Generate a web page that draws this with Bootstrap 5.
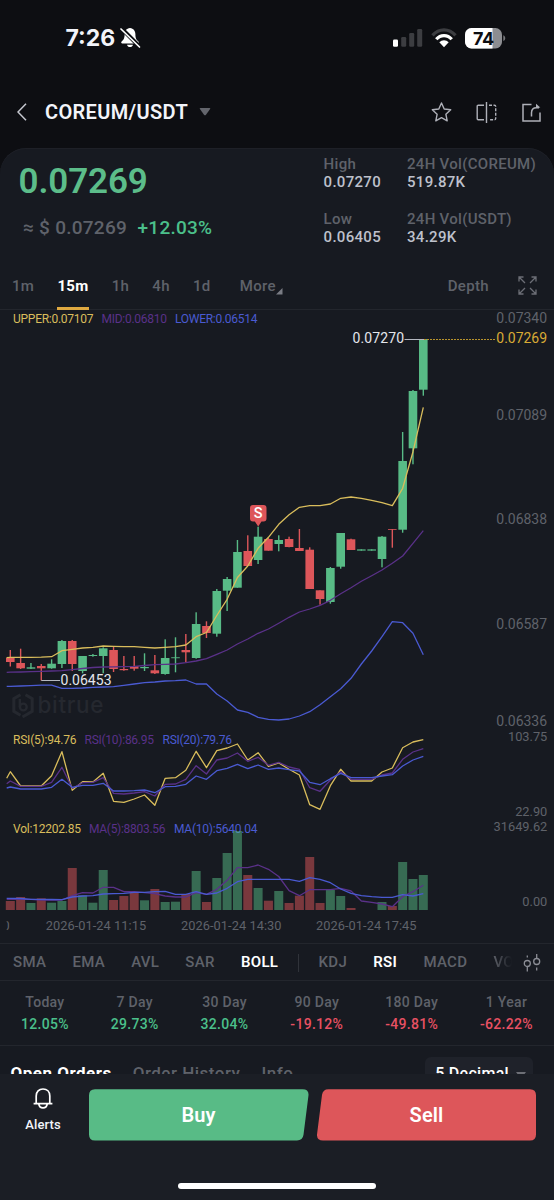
<!DOCTYPE html>
<html lang="en" data-bs-theme="dark">
<head>
<meta charset="utf-8">
<meta name="viewport" content="width=device-width, initial-scale=1">
<title>COREUM/USDT</title>
<link href="https://cdn.jsdelivr.net/npm/bootstrap@5.3.0/dist/css/bootstrap.min.css" rel="stylesheet">
<style>
:root{--up:#58bb86;--down:#dd565a;--dim:#5f626a;--panel:#171a21;--hair:#23262d}
body{background:#0d0e12;font-family:Roboto,"Liberation Sans",sans-serif;font-weight:500;color:#f2f4fa;line-height:1;letter-spacing:.3px}
.app-screen{width:554px;height:1200px;overflow:hidden}
svg{display:block;flex:none}
.status-bar{height:76px;padding:0 48px 0 65.5px}
.clock{font:700 23px Inter,sans-serif;letter-spacing:0}
.title-bar{height:72px;padding:0 13px 0 17px}
.pair{font-size:20px;font-weight:600;letter-spacing:.35px}
.market{background:var(--panel);border-radius:26px 26px 0 0;box-shadow:inset 0 1px #1e2027;height:1052px}
.quote{height:114px;padding:0 18px 0 18.5px}
.last{font-size:35px;line-height:40px;font-weight:600;color:#5cbd8a;letter-spacing:-.1px;margin-top:14px}
.approx{font-size:19px;line-height:24px;color:var(--dim);margin-top:14px;padding-left:4.5px;letter-spacing:.26px}
.dim{color:var(--dim)}
.upc{color:#4bc08b}
.downc{color:#e85163}
.stats{font-size:15px;line-height:18px;color:#bec1cc}
.stats>div{height:55.5px}
.stats .k{color:var(--dim)}
.ranges{height:48px;font-size:15px;padding:0 17.5px 0 12px;color:var(--dim)}
.ranges>span{line-height:48px}
.ranges .on{color:#fff;font-weight:700;height:48px;box-shadow:inset 0 -3px #dfa941}
.hair-b{border-bottom:1px solid var(--hair)}
.hair-t{border-top:1px solid var(--hair)}
.indicators{height:38px;font-size:15px;padding:1px 13px 0;color:var(--dim);gap:26.2px}
.indicators>span{flex:none}
.on{color:#fff}
.indicators .on{font-weight:600}
.divider{width:1px;height:18px;background:#30333a;margin:0 -6.500px}
.fade-out{-webkit-mask-image:linear-gradient(90deg,#000,transparent 19px);margin-right:-28px}
.perf{height:65px;padding:10px 21px 0;font-size:14px;line-height:22px;letter-spacing:.3px}
.orders{height:60px;padding:11px 21px 0 10.5px;font-size:17px;line-height:32px;color:var(--dim);letter-spacing:.5px}
.decimals{background:#1f222a;border-radius:6px;height:50px;padding:1px 7px 0 10px;color:#fff;font-size:16px;letter-spacing:.3px}
.trade-bar{background:#1b1e25;width:554px;height:126px;left:0;top:1074px;padding:15px 18px 0 0}
.alerts{width:86px;font-size:13px;letter-spacing:.1px}
.trade{width:219px;height:52px;font-size:20px;font-weight:600;letter-spacing:.1px;color:#fff;background:none;border:0}
.trade svg{left:0;top:0}
.trade span{position:relative}
.home-pill{width:198px;height:6px;border-radius:3px;background:#fff;left:178px;top:109px}
.chart text{font-weight:400;letter-spacing:0}
</style>
</head>
<body>
<div class="app-screen position-relative">
  <div class="status-bar d-flex align-items-center justify-content-between">
    <div class="d-flex align-items-center gap-1">
      <span class="clock">7:26</span>
      <svg width="22" height="22" viewBox="0 0 22 22"><path fill="#fff" d="M11 1C7.500 1.400 5.600 4 5.600 7.200c0 4-.9 5.400-3 7.300-.8.8-.4 1.900.7 1.900h15.400c1.100 0 1.500-1.100.7-1.900-2.100-1.900-3-3.300-3-7.300C16.400 4 14.500 1.400 11 1zM8 17.700c.4 1.500 1.500 2.300 3 2.300s2.600-.8 3-2.300z"/><path d="M2.500 1.500 20.500 19.500" stroke="#0d0e12" stroke-width="4"/><path d="M2 2 20.500 20" stroke="#fff" stroke-width="1.700" stroke-linecap="round"/></svg>
    </div>
    <div class="d-flex align-items-center" style="gap:8px">
      <svg width="30" height="18" viewBox="0 0 30 18"><g fill="#3c3d41"><rect x="8.200" y="8" width="5" height="9.800" rx="1.300"/><rect x="16.200" y="4" width="5" height="13.800" rx="1.300"/><rect x="24.200" y="0" width="5" height="17.800" rx="1.300"/></g><rect x="0" y="10.500" width="5" height="7.300" rx="1.300" fill="#fff"/></svg>
      <svg width="26" height="20" viewBox="0 0 26 20"><g fill="none" stroke-width="3.200"><path stroke="#3c3d41" d="M1.500 7.400C8-.1 18-.1 24.500 7.400"/><path stroke="#fff" d="M5.300 11.300c4.200-5 11.200-5 15.400 0"/></g><path fill="#fff" d="M8.300 14.300c2.700-2.700 6.700-2.700 9.400 0L13 19.200z"/></svg>
      <svg width="41" height="21" viewBox="0 0 41 21"><defs><clipPath id="bat"><rect width="37" height="20.500" rx="6.500"/></clipPath></defs><g clip-path="url(#bat)"><rect width="37" height="21" fill="#8c8d91"/><rect width="27.500" height="21" fill="#fff"/></g><path d="M38.300 7.300c2.600.8 2.600 5 0 5.800z" fill="#77787c"/><text x="18.500" y="16.600" text-anchor="middle" font-family="Inter" font-weight="700" font-size="18" letter-spacing="-.3" fill="#0d0e12">74</text></svg>
    </div>
  </div>
  <div class="title-bar d-flex align-items-center">
    <svg width="10" height="18" viewBox="0 0 10 18"><path d="M9 .8 1 9l8 8.200" fill="none" stroke="#c6c8d0" stroke-width="1.500"/></svg>
    <span class="pair" style="margin-left:18px">COREUM/USDT</span>
    <svg width="12" height="8" viewBox="0 0 12 8" style="margin-left:10.500px"><path d="M1.500 0h9q1.300 0 .6 1L7 6.800q-1 1.100-2 0L.9 1Q.2 0 1.500 0z" fill="#63656c"/></svg>
    <div class="ms-auto d-flex align-items-center">
      <svg width="21" height="20" viewBox="0 0 21 20" fill="none" stroke="#aeb0b8" stroke-width="1.400" stroke-linejoin="round"><path d="m10.500 1 2.700 6 6.500.8-4.800 4.500 1.300 6.500-5.700-3.200-5.700 3.200 1.300-6.500L1.300 7.800l6.500-.8z"/></svg>
      <svg width="21" height="21" viewBox="0 0 21 21" fill="none" stroke="#aeb0b8" stroke-width="1.400" style="margin-left:24.500px"><path d="M8 3.200H2.200q-1 0-1 1v12.600q0 1 1 1H8M10.500 0v21"/><path stroke-dasharray="3 1.500" d="M13 3.200h5.500q1.200 0 1.200 1.200v12.200q0 1.200-1.200 1.200H13"/></svg>
      <svg width="19" height="19" viewBox="0 0 19 19" fill="none" stroke="#aeb0b8" stroke-width="1.500" style="margin-left:25px"><path d="M9.500 1.500H1v16.400h17V9.500M9.500 13.500V9.800q0-5 5-5H17"/><path d="M14 .7 18.300 4.500 14 5z" fill="#aeb0b8" stroke="none"/></svg>
    </div>
  </div>

  <main class="market">
    <section class="quote d-flex">
      <div>
        <div class="last">0.07269</div>
        <div class="approx">≈ $ 0.07269 <span class="upc" style="margin-left:5.500px">+12.03%</span></div>
      </div>
      <div class="stats ms-auto d-flex pt-2" style="margin-top:-1.500px;gap:26px">
        <div><div><div class="k">High</div>0.07270</div><div style="margin-top:19.500px"><div class="k">Low</div>0.06405</div></div>
        <div><div><div class="k">24H Vol(COREUM)</div>519.87K</div><div style="margin-top:19.500px"><div class="k">24H Vol(USDT)</div>34.29K</div></div>
      </div>
    </section>
    <nav class="ranges d-flex hair-b align-items-center" style="gap:23.200px">
      <span>1m</span><span class="on">15m</span><span>1h</span><span>4h</span><span>1d</span>
      <span class="d-flex" style="margin-left:6px">More<svg width="7" height="7" viewBox="0 0 7 7" style="margin:26px 0 0 0"><path d="M6.500 0v6.500H0z" fill="#7a7c84"/></svg></span>
      <span class="ms-auto">Depth</span>
      <svg width="19" height="19" viewBox="0 0 19 19" fill="none" stroke="#6c6e76" stroke-width="1.300" style="margin-left:5.500px"><path d="M1 5.500V1h4.500M1 1l6 6M13.500 1H18v4.500M18 1l-6 6M1 13.500V18h4.500M1 18l6-6M18 13.500V18h-4.500M18 18l-6-6"/></svg>
    </nav>
    <svg class="chart" id="chart" width="554" height="633" viewBox="0 310 554 633" font-family="Roboto, sans-serif"></svg>
    <nav class="indicators d-flex align-items-center hair-t hair-b">
      <span>SMA</span><span>EMA</span><span>AVL</span><span>SAR</span><span class="on">BOLL</span><span class="divider"></span><span>KDJ</span><span class="on">RSI</span><span>MACD</span><span class="fade-out">VOL</span>
      <svg width="18" height="18" viewBox="0 0 18 18" fill="none" stroke="#8b8d95" stroke-width="1.300" class="ms-auto"><circle cx="4.300" cy="9.500" r="3"/><circle cx="13.700" cy="7.500" r="3"/><path d="M4.300 1.500v2M4.300 12.500v5M13.700 0v4.500M13.700 13.500v3"/></svg>
    </nav>
    <section class="perf d-flex justify-content-between text-center hair-b">
      <div><div class="dim">Today</div><div class="upc">12.05%</div></div>
      <div><div class="dim">7 Day</div><div class="upc">29.73%</div></div>
      <div><div class="dim">30 Day</div><div class="upc">32.04%</div></div>
      <div><div class="dim">90 Day</div><div class="downc">-19.12%</div></div>
      <div><div class="dim">180 Day</div><div class="downc">-49.81%</div></div>
      <div><div class="dim">1 Year</div><div class="downc">-62.22%</div></div>
    </section>
    <section class="orders d-flex" style="gap:21px">
      <span class="on fw-bold">Open Orders</span><span>Order History</span><span>Info</span>
      <div class="decimals ms-auto d-flex">5 Decimal<svg width="10" height="6" viewBox="0 0 10 6" style="margin:14px 0 0 7px"><path d="M0 0h10L6 5.500H4z" fill="#6d6f76"/></svg></div>
    </section>
  </main>

  <footer class="trade-bar position-absolute d-flex align-items-start">
    <div class="alerts d-flex flex-column align-items-center">
      <svg width="20" height="21" viewBox="0 0 20 21" fill="none" stroke="#fff" stroke-width="1.700" stroke-linejoin="round" style="margin-top:-1px"><path d="M3.200 15.500V8c0-4.300 2.800-7 6.800-7s6.800 2.700 6.800 7v7.500M.6 15.700h18.800M5.800 16c.4 2.500 2 3.900 4.200 3.900s3.800-1.400 4.200-3.900"/></svg>
      <span style="margin-top:9px">Alerts</span>
    </div>
    <button class="trade p-0 position-relative" style="margin-left:3px"><svg class="position-absolute" width="220" height="52" viewBox="0 0 220 52"><path d="M6 .3h207.500q6.500 0 6 6l-5 39.500q-.8 5.700-6.500 5.700H6q-6 0-6-6v-39.200q0-6 6-6z" fill="#58bb86"/></svg><span>Buy</span></button>
    <button class="trade p-0 position-relative" style="margin-left:9px"><svg class="position-absolute" width="220" height="52" viewBox="0 0 220 52"><path d="M11.500 .3H213q6 0 6 6v39.200q0 6-6 6H6q-6.300 0-6-6l5-39.500q.8-5.700 6.500-5.700z" fill="#dd565a"/></svg><span>Sell</span></button>
    <div class="home-pill position-absolute"></div>
  </footer>
</div>

<script src="https://cdn.jsdelivr.net/npm/bootstrap@5.3.0/dist/js/bootstrap.bundle.min.js"></script>
<script>
const UP='#58bb86', DOWN='#dd565a', GOLD='#d9bd5c', VIOLET='#5a3189', BLUE='#4a5ad2', DIM='#5f626a';
const X0=10.3, STEP=10.325, W=8.600;
const cx=i=>+(X0+i*STEP).toFixed(2);
// direction, body top, body bottom, wick top, wick bottom
const candles=[
['d',657.7,662,650,666.500],['d',663,668.300,648.700,669],['u',667.300,668.700,663,669],['d',666,668.300,664,680.500],['u',663.700,668.300,659.300,668.700],
['u',641,664,640,668],['d',641,664,640,671],['u',656,671,656,673.300],['u',655,656,654,656.700],['u',648.300,656,647.300,673.300],
['d',650,669,647,672],['d',669,670.200,656,670.700],['d',666,668.700,656,670.700],['u',667,668.200,653.300,671],['d',670.300,673.300,655,674],
['u',658,674,639.300,674.700],['u',657.300,658.200,637.300,672.300],['d',650,652.300,634,662.300],['u',624,658,612.300,658.700],['d',626,633,621.300,638],
['u',591,633.700,589,636.700],['u',579,590.700,577,611],['u',552,587.700,540,587.700],['d',551,566,535.300,566],['u',536.700,560,526.700,564],
['d',539,550.700,538,550.700],['u',540,544,535.300,551.300],['d',539,547,536.700,547.300],['d',548,551,529,551],['d',549.700,589,547.300,589],
['d',590.300,599,590.300,604.700],['u',568,602,567,603.700],['u',533,566.700,533,568.700],['d',539.300,550,538.700,550],['u',549.400,550.600,549.400,550.600],
['u',549.400,550.600,549.400,550.600],['u',536.700,559,536,567.300],['d',529.200,530,529.200,547.700],['u',461,529.700,432,532.700],['u',391,448.300,390,464.300],['u',339,389.700,339,395.700]];
const volTop=[901,897,903,898.300,902.700,901,868,895.300,902.700,870,900,896,892.300,900.300,889,902,901.700,894,871,902,878,853,831,875,888,900.700,891,903,895.700,857,903,890,896,908,910,910,902,906,862,879,875];
// each series starts at the left edge of the plot, then one value per candle
const lines=[
[GOLD,[657.7,657.3,657.3,657.3,657.2,656.7,650.7,649.3,648,647.3,646,646.3,646.7,646.7,647.3,648,647.3,646.7,645,636.7,632.5,615.5,599.3,577.5,566,548.3,537.3,524.3,514.7,507.3,505.7,505.7,504,498.3,497,498.3,500.3,502.7,505.7,488.3,451.7,407.3]],
[VIOLET,[672.3,672.2,672,671.7,671.3,671,670.7,669.7,668.5,667.5,667,666.8,666.6,666.3,665.5,664.7,664.3,664,662.7,661,658.7,654.3,650,644,639,633.3,629,623.3,617.3,612,609,605.3,600.3,593.7,587.7,581.3,575.7,570,563.3,556,543.3,530.7]],
[BLUE,[686.3,686.3,686,685.7,685.2,685.2,688.3,688.3,688,687.3,687,686.7,685.3,684,682.7,682,681,680.7,680,684,684,694,701,710,712.3,717.3,719.3,720,719,716,711.7,704.7,696.7,688.7,678.3,664,651,636.7,621.7,622.7,633.3,654.7]],
[GOLD,[778.3,771.7,786,786,786,775.7,751.7,790.3,781.7,782,773.3,801.3,802.3,799,795,805.3,778.3,777.7,770.3,751.3,767.7,750.7,748,744,760,752.7,766.3,763,769.3,775,804.7,809.3,785.7,769.3,781,781,781,772,768,747.7,742,739.7]],
[VIOLET,[783.7,781,786.3,786.3,786.3,782.3,767.3,788.3,782.7,782.3,777.7,793.3,794,793,791.7,796,784.3,784,779.3,765.7,774,760,758,753,761.3,757.3,765.3,762.3,767,769.3,787.7,791.3,780,771.7,779.3,779.3,779.3,775,773,759.3,752,748.7]],
[BLUE,[788,787,789,789,789,787.3,779.3,787.3,785.3,785.3,783.3,791,791,790.7,790,792.7,786.7,786.3,784.3,776,779.3,770.7,768.3,764.3,768.7,765,769.3,768,769.7,771,782.3,784.7,778.7,773.3,777.7,777.7,777.7,776,774.7,766,760,756.3]],
[VIOLET,[899.3,899.3,899.3,899.3,900,900,900,895.7,892.7,893,887.3,887.3,891.7,891.7,892.7,893.7,896,897,897,892.7,894.3,889.3,880.3,867.7,867.7,865,869.3,876.5,890.7,895.7,889.7,889.7,889.7,888.3,891,901,902.3,904,906.7,896.7,891.7,885.3]],
[BLUE,[898.3,898.3,898.5,899.3,899.3,899.5,899.7,897,896,895.7,894,893.7,893.3,892.3,892.3,891.7,891.3,894.3,894.3,891.7,894.3,893,888.3,881.7,879.3,879.3,879.3,879.3,879.3,881.3,877.7,879.3,882.7,889,893.3,895.7,896.7,897.3,897.3,894.7,896,893.7]]];
let s='';
const txt=(t,x,y,size,fill,w,extra='')=>`<text x="${x}" y="${y}" font-size="${size}" fill="${fill}" ${w?`textLength="${w}"`:''} ${extra}>${t}</text>`;
// watermark
s+=`<g fill="none" stroke="#25282f" stroke-width="3"><path d="M20.500 694.700 13.800 698.700v12.600l6.700 4M25.500 694.700l6.700 4v12.600L22.500 717"/><circle cx="23.300" cy="707" r="3.400" stroke-width="2.400"/><path d="M19.800 699v8" stroke-width="2.400"/></g>`;
s+=txt('bitrue',37.500,713,22.500,'#25282f',66,'style="font-weight:500;font-family:Inter,sans-serif"');
candles.forEach((c,i)=>{const f=c[0]==='u'?UP:DOWN,x=cx(i);
 s+=`<rect x="${x-W/2}" y="${c[1]}" width="${W}" height="${(c[2]-c[1]).toFixed(1)}" fill="${f}"/><rect x="${x-.7}" y="${c[3]}" width="1.400" height="${(c[4]-c[3]).toFixed(1)}" fill="${f}"/>`;
});
// legends
s+=txt('UPPER:0.07107',13,323.300,12,GOLD,80.500)+txt('MID:0.06810',101.500,323.300,12,VIOLET,65.500)+txt('LOWER:0.06514',175,323.300,12,BLUE,82.500);
s+=txt('RSI(5):94.76',13,743.500,12,GOLD,63.500)+txt('RSI(10):86.95',84.500,743.500,12,VIOLET,69.500)+txt('RSI(20):79.76',162.500,743.500,12,BLUE,69.500);
s+=txt('Vol:12202.85',13,833.400,12,GOLD,68)+txt('MA(5):8803.56',89,833.400,12,VIOLET,76.500)+txt('MA(10):5640.04',174,833.400,12,BLUE,83.500);
volTop.forEach((y,i)=>{ if(y<910) s+=`<rect x="${cx(i)-4.500}" y="${y}" width="9" height="${(910-y).toFixed(1)}" fill="${candles[i][0]==='u'?UP:DOWN}" opacity=".5"/>`;});
lines.forEach(([col,v])=>{s+=`<polyline fill="none" stroke="${col}" stroke-width="1.300" stroke-linejoin="round" points="${v.map((y,i)=>(i?cx(i-1):6.700)+','+y).join(' ')}"/>`;});
// price scale
[['0.07340',323],['0.07089',419.500],['0.06838',524.300],['0.06587',629],['0.06336',725.700]].forEach(a=>s+=txt(a[0],496.300,a[1],14,DIM,50.700));
s+=txt('0.07269',496.300,342.700,14,'#d9ab35',50.700);
s+=`<path d="M424 339.500H496" stroke="#b8932c" stroke-dasharray="2 1"/>`;
[['103.75',741.300],['22.90',816],['31649.62',831.200],['0.00',906]].forEach(a=>s+=txt(a[0],547.300,a[1],12.800,DIM,0,'text-anchor="end"'));
// extremes
s+=`<path d="M404.500 339.500H424M41.300 680.500H60" stroke="#b5b8c0" stroke-width="1"/>`+txt('0.07270',352.500,343.300,14,'#e4e6ec',51.500)+txt('0.06453',60.500,685,14,'#e4e6ec',51);
// sell marker
s+=`<path d="M253 505h10.500q3 0 3 3v10.500q0 3-3 3h-2l-3.300 5-3.300-5H253q-3 0-3-3V508q0-3 3-3z" fill="${DOWN}"/>`+txt('S',258.200,517.800,14.500,'#fff',0,'text-anchor="middle" style="font-weight:500"');
// time scale
s+=`<defs><clipPath id="edge"><rect x="6.700" y="915" width="20" height="22"/></clipPath></defs>`+txt('0',2.500,930.400,12.800,DIM,0,'clip-path="url(#edge)"');
[['2026-01-24 11:15',45.700],['2026-01-24 14:30',181],['2026-01-24 17:45',316]].forEach(a=>s+=txt(a[0],a[1],930.400,12.800,DIM,100.500));
document.getElementById('chart').innerHTML=s;
</script>
</body>
</html>
